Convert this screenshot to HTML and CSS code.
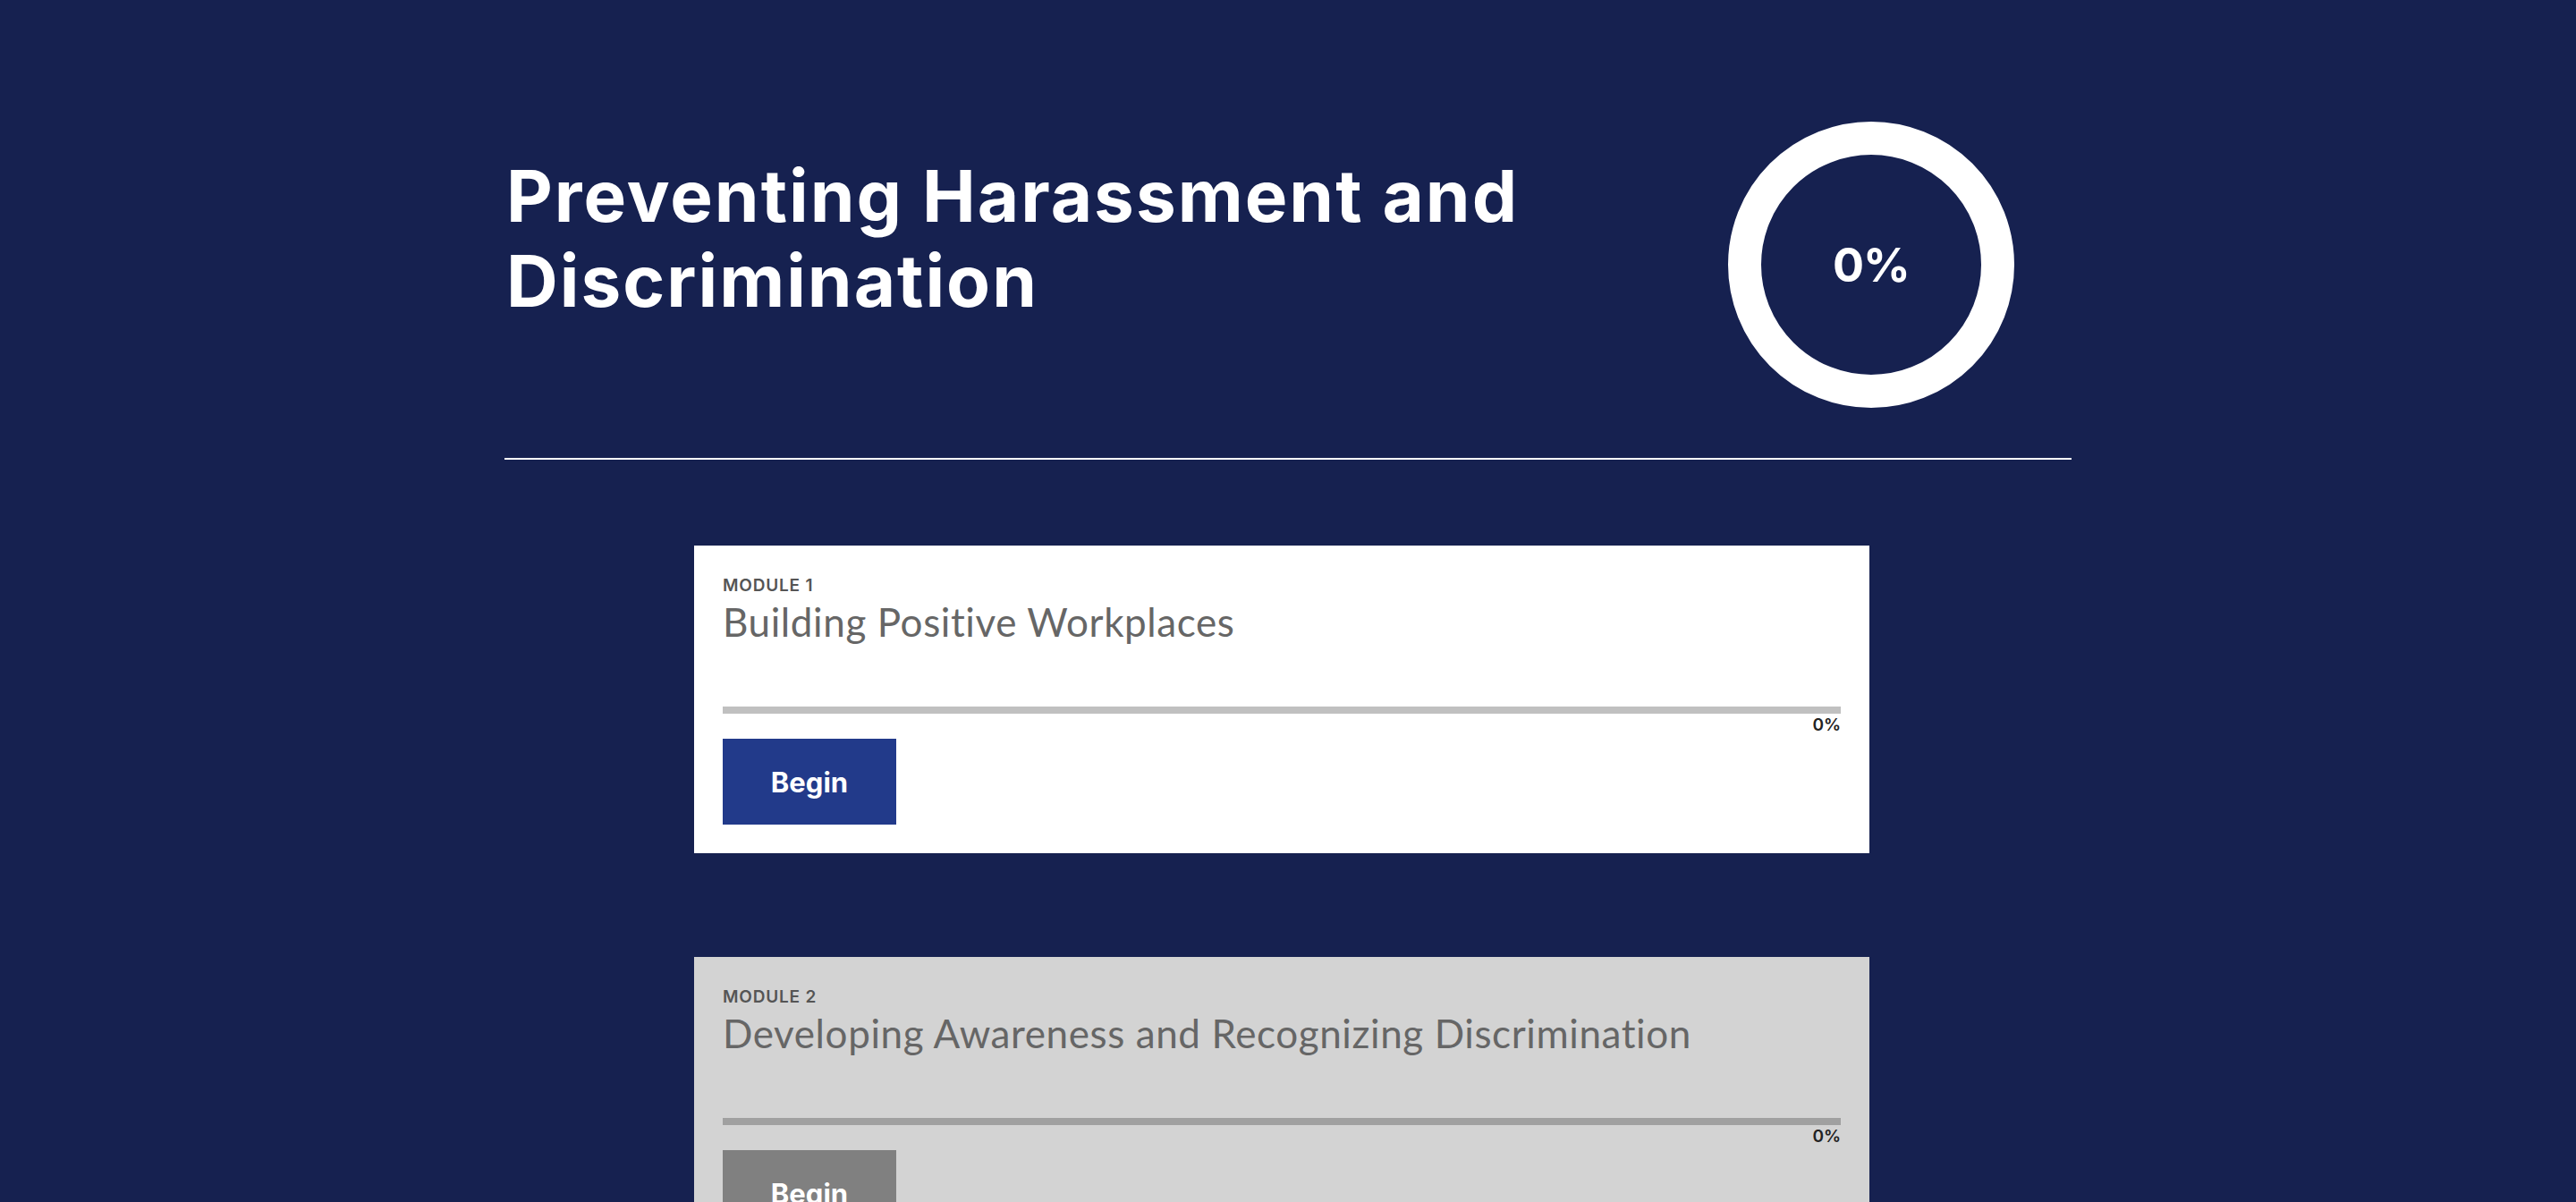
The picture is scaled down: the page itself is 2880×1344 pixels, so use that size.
FILE: index.html
```html
<!DOCTYPE html>
<html lang="en">
<head>
<meta charset="utf-8">
<title>Preventing Harassment and Discrimination</title>
<link rel="stylesheet" href="styles.css">
</head>
<body>
<main class="page">
  <header class="hero">
    <h1 class="hero-title">Preventing Harassment and<br>Discrimination</h1>
    <div class="ring"><span class="ring-value">0%</span></div>
  </header>
  <hr class="divider">
  <section class="modules">
    <article class="module">
      <div class="module-label">MODULE 1</div>
      <h2 class="module-title">Building Positive Workplaces</h2>
      <div class="bar"></div>
      <div class="bar-value">0%</div>
      <button class="begin">Begin</button>
    </article>
    <article class="module locked">
      <div class="module-label">MODULE 2</div>
      <h2 class="module-title">Developing Awareness and Recognizing Discrimination</h2>
      <div class="bar"></div>
      <div class="bar-value">0%</div>
      <button class="begin">Begin</button>
    </article>
  </section>
</main>
</body>
</html>
```

FILE: styles.css
```css
html, body {
  margin: 0;
  padding: 0;
  background: #162150;
}
body {
  font-family: "Inter", "Liberation Sans", sans-serif;
}
.page {
  width: 1752px;
  margin: 0 auto;
}
.hero {
  display: flex;
  justify-content: space-between;
  align-items: flex-start;
  padding-top: 136px;
  height: 320px;
}
.hero-title {
  margin: 35px 0 0 2px;
  font-family: "Inter", sans-serif;
  font-weight: 700;
  font-size: 80px;
  line-height: 95px;
  color: #ffffff;
  letter-spacing: 2px;
}
.ring {
  width: 320px;
  height: 320px;
  box-sizing: border-box;
  border: 37px solid #ffffff;
  border-radius: 50%;
  margin-right: 64px;
  display: flex;
  align-items: center;
  justify-content: center;
}
.ring-value {
  font-weight: 700;
  font-size: 52px;
  letter-spacing: -1px;
  color: #ffffff;
}
.divider {
  margin: 56px 0 0 0;
  border: 0;
  height: 2px;
  background: #ffffff;
}
.modules {
  padding-top: 96px;
  padding-left: 212px;
}
.module {
  width: 1314px;
  box-sizing: border-box;
  background: #ffffff;
  padding: 32px 32px 32px 32px;
  margin-bottom: 116px;
}
.module-label {
  font-weight: 600;
  font-size: 19px;
  line-height: 20px;
  margin-top: 3px;
  letter-spacing: 0.8px;
  color: #555555;
}
.module-title {
  margin: 6px 0 0 0;
  font-family: "Lato", sans-serif;
  font-weight: 400;
  font-size: 44px;
  line-height: 48px;
  letter-spacing: 0.6px;
  color: #666666;
}
.bar {
  margin-top: 71px;
  height: 8px;
  background: #c0c0c0;
}
.bar-value {
  margin-top: 3px;
  text-align: right;
  font-weight: 600;
  font-size: 19px;
  line-height: 20px;
  color: #222222;
}
.begin {
  display: block;
  margin-top: 5px;
  width: 194px;
  height: 96px;
  border: 0;
  background: #223a8a;
  color: #ffffff;
  font-family: "Inter", sans-serif;
  font-weight: 700;
  font-size: 31px;
  padding: 0;
}
.module.locked {
  background: #d3d3d3;
}
.module.locked .bar {
  background: #a0a0a0;
}
.module.locked .begin {
  background: #808080;
}
```
